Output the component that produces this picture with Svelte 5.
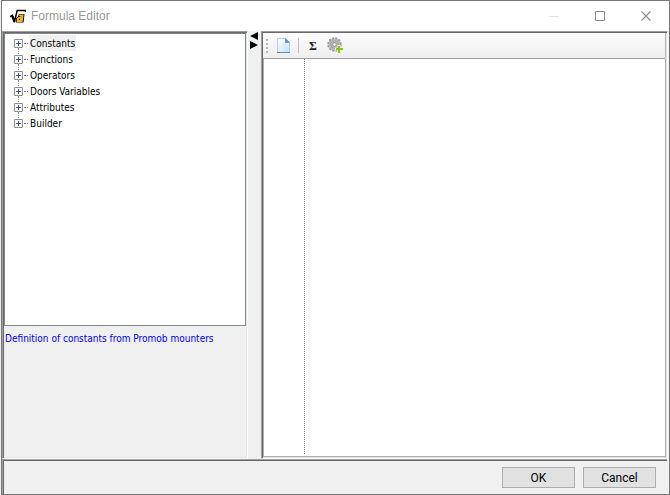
<script>
  const nodes = ['Constants', 'Functions', 'Operators', 'Doors Variables', 'Attributes', 'Builder'];
  let selected = $state('Constants');
  let formula = $state('');
</script>

<div class="window">
  <header>
    <svg class="logo" width="17" height="15" viewBox="0 0 17 15" aria-hidden="true">
      <path d="M0 8 2.2 6.3 4.6 12 7.2 1.5H15.3V3" fill="none" stroke="#000" stroke-width="1.5" />
      <path d="M2.2 7 4.6 13" stroke="#000" stroke-width="2.2" />
      <path d="M9 5H14.5L13.6 13.5H6.2V9L8 7.5z" fill="#000" />
      <path d="M9.3 5.4h4.3l-1 7.5H7V9.2l1.4-1.3h2.2l.2-.7H9z" fill="#ffb31a" />
      <path d="M9 9.8h1.3l-.3 1.2H8.8z" fill="#000" />
    </svg>
    <h1>Formula Editor</h1>
    <div class="caption">
      <button aria-label="Minimize"><svg width="11" height="11"><path d="M0 5.5h10" stroke="#e4e4e4" /></svg></button>
      <button aria-label="Maximize"><svg width="11" height="11"><path d="M.5.5h9v9h-9z" fill="none" stroke="#8c8c8c" /></svg></button>
      <button aria-label="Close"><svg width="11" height="11"><path d="M.5.5l9 9M9.5.5l-9 9" stroke="#8c8c8c" stroke-width="1.1" /></svg></button>
    </div>
  </header>

  <main>
    <aside class="sunken">
      <ul class="tree">
        {#each nodes as node}
          <li>
            <button class="expand" aria-label="Expand {node}">
              <svg width="9" height="9"><path d="M.5.5h8v8h-8z" fill="#f7f7f7" stroke="#919191" /><path d="M2 4.5h5M4.5 2v5" stroke="#3c50a0" /></svg>
            </button>
            <span class="branch"></span>
            <button class="label" class:selected={selected === node} onclick={() => (selected = node)}>{node}</button>
          </li>
        {/each}
      </ul>
      <p>Definition of constants from Promob mounters</p>
    </aside>

    <div class="splitter">
      <svg width="9" height="18" viewBox="0 0 9 18" aria-hidden="true"><path d="M8 1v8L0 5zM0 10v8l8-4z" fill="#000" /></svg>
    </div>

    <section class="sunken">
      <div class="toolbar">
        <svg class="grip" width="3" height="16" aria-hidden="true"><path d="M1 1v14" stroke="#b4b4b4" stroke-width="2" stroke-dasharray="2" /></svg>
        <button class="new" aria-label="New">
          <svg width="13" height="15" viewBox="0 0 13 15">
            <defs><linearGradient id="page" x2="1" y2="1"><stop stop-color="#fff" /><stop offset="1" stop-color="#c3e1fa" /></linearGradient></defs>
            <path d="M.5.5h8l4 4v10H.5z" fill="url(#page)" stroke="#b3d0ee" />
            <path d="M8.5.5v4h4z" fill="#5a91cf" stroke="#6ea0d8" />
            <path d="M0 14.5h13" stroke="#5f8abd" />
          </svg>
        </button>
        <span class="separator"></span>
        <button class="sum" aria-label="Sum">Σ</button>
        <button class="gear" aria-label="Add function">
          <svg width="16" height="17" viewBox="0 0 16 17">
            <circle cx="7.5" cy="7.5" r="6.2" fill="#b9b9b9" stroke="#999" stroke-width="2" stroke-dasharray="2 1.25" />
            <circle cx="7.5" cy="7.5" r="5.5" fill="#bdbdbd" />
            <circle cx="7.5" cy="7.5" r="3.8" fill="none" stroke="#a0a0a0" />
            <circle cx="7.5" cy="7.5" r="1.8" fill="#f5f5f5" stroke="#8e8e8e" />
            <path d="M12 8v9M8 12h8" stroke="#eee" stroke-width="3" />
            <path d="M12 9v7M9 12h7" stroke="#87c800" stroke-width="2" />
          </svg>
        </button>
      </div>
      <div class="editor">
        <span class="gutter"></span>
        <textarea aria-label="Formula" bind:value={formula} spellcheck="false"></textarea>
      </div>
    </section>
  </main>

  <footer>
    <button>OK</button>
    <button>Cancel</button>
  </footer>
</div>

<style>
  * { box-sizing: border-box; }
  .window {
    display: flex;
    flex-direction: column;
    height: 100vh;
    margin-left: 1px;
    border: 1px solid #777;
    background: #f0f0f0;
    color: #000;
    font: 10px/16px "DejaVu Sans Condensed", "Liberation Sans", sans-serif;
  }
  button { padding: 0; border: 0; background: none; font: inherit; color: inherit; }
  svg { display: block; }
  header {
    display: flex;
    align-items: center;
    height: 30px;
    padding-left: 8px;
    background: #fff;
  }
  h1 {
    flex: 1;
    margin: 0 0 0 4px;
    color: #999;
    font: 12px/16px "Liberation Sans", sans-serif;
  }
  .caption { display: flex; height: 28px; }
  .caption button { display: grid; place-items: center; width: 46px; }
  main { display: flex; flex: 1; min-height: 0; }
  .sunken {
    display: flex;
    flex-direction: column;
    padding: 1px;
    border: 1px solid;
    border-color: #a0a0a0 #fff #fff #a0a0a0;
    box-shadow: inset 1px 1px #696969, inset -1px -1px #e3e3e3;
  }
  aside { width: 246px; }
  .tree {
    height: 293px;
    margin: 0;
    padding: 1px 0 0 8px;
    border: 1px solid #828790;
    background: #fff;
    list-style: none;
  }
  li { position: relative; display: flex; align-items: center; height: 16px; padding-left: 1px; }
  li:not(:last-child)::after {
    content: "";
    position: absolute;
    left: 5px;
    top: 13px;
    height: 6px;
    border-left: 1px dotted #808080;
  }
  .branch { width: 4px; margin: 0 1px; border-top: 1px dotted #808080; }
  .label { height: 16px; padding: 2px 1px 0; line-height: 14px; }
  .selected { background: #f0f0f0; }
  p { margin: 5px 0; padding-left: 1px; color: #00f; }
  .splitter { display: flex; justify-content: center; width: 13px; }
  section { flex: 1; min-width: 0; margin-right: 1px; }
  .toolbar {
    display: flex;
    align-items: center;
    height: 26px;
    padding: 0 3px;
    border-right: 1px solid #b5b5b5;
    border-bottom: 1px solid #a0a0a0;
    border-radius: 0 0 2px 0;
    background: linear-gradient(#fdfdfd, #eeeeee);
  }
  .new { margin: 0 8px; }
  .separator { height: 15px; border-left: 1px solid #bdbdbd; }
  .sum { width: 28px; color: #222; font: bold 12px/16px "Liberation Serif", serif; }
  .editor {
    display: flex;
    flex: 1;
    min-height: 0;
    padding-bottom: 2px;
    border: 1px solid #abadb3;
    border-top: 0;
    background: #fff;
  }
  .gutter { width: 41px; border-right: 1px dotted #777; }
  textarea {
    flex: 1;
    min-width: 0;
    padding: 2px;
    border: 0;
    outline: 0;
    resize: none;
    font: 13px/16px "Liberation Mono", monospace;
  }
  footer {
    display: flex;
    justify-content: flex-end;
    gap: 8px;
    height: 35px;
    padding: 7px 11px 0 0;
    margin-right: 2px;
    border: solid #a0a0a0;
    border-width: 1px 0 0 1px;
    box-shadow: inset 1px 1px #696969;
  }
  footer button {
    width: 73px;
    height: 21px;
    border: 1px solid #adadad;
    background: #e1e1e1;
    font: 12px/16px "Roboto", "Liberation Sans", sans-serif;
  }
  :global(body) { margin: 0; background: #f0f0f0; }
</style>
